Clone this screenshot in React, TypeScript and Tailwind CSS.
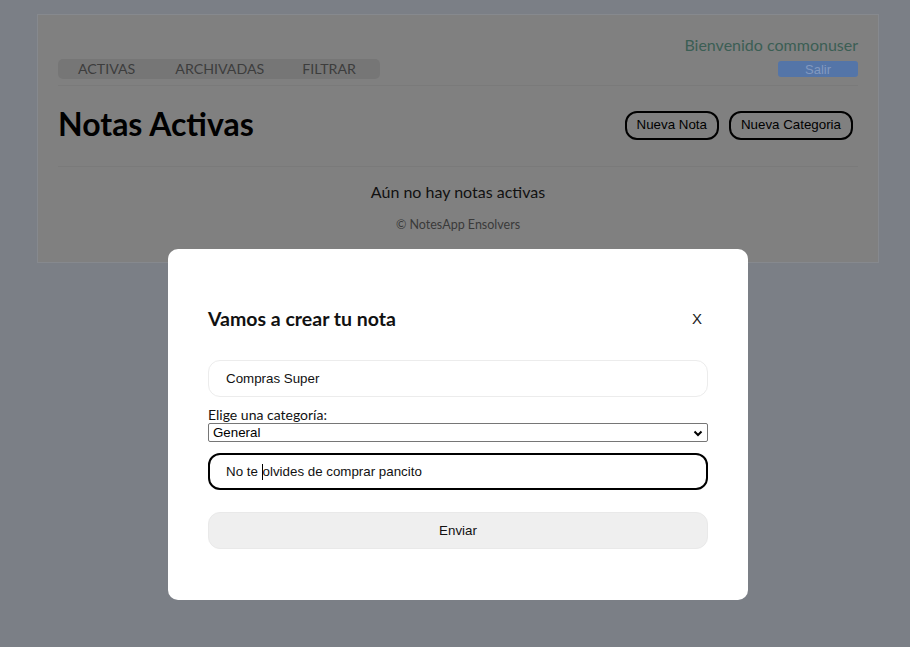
import React from "react";

const arial = { fontFamily: "'Liberation Sans', Arial, sans-serif" };

export default function App() {
  return (
    <div className="relative w-[910px] h-[647px] overflow-hidden bg-[#7b7f86]" style={{ fontFamily: "Lato, 'Open Sans', sans-serif" }}>
      {/* Page (dimmed) */}
      <div className="pt-[14px] pl-[37px]">
        <div className="w-[842px] h-[249px] bg-[#808080] border border-[#86898e] px-[20px]">
          <div className="flex justify-between items-start">
            <div className="pt-[44px]">
              <div className="flex items-center h-[20px] w-[322px] bg-[#767676] rounded-[5px] pl-[20px] text-[14.2px] text-[#3d3d3d] leading-none">
                <span>ACTIVAS</span>
                <span className="ml-[40px]">ARCHIVADAS</span>
                <span className="ml-[38px]">FILTRAR</span>
              </div>
            </div>
            <div className="flex flex-col items-end pt-[20px]">
              <div className="text-[16px] text-[#3b5e54] leading-[20px]">Bienvenido commonuser</div>
              <div className="mt-[6px] w-[80px] h-[16px] rounded-[3px] bg-[#5475a8] text-[13px] text-[#8299c0] flex items-center justify-center leading-none" style={arial}>Salir</div>
            </div>
          </div>
          <div className="mt-[6px] h-px bg-[#7a7a7a]" />
          <div className="flex justify-between items-center h-[80px]">
            <h1 className="text-[32px] font-bold text-black leading-none mt-[-4px]">Notas Activas</h1>
            <div className="flex gap-[10px] mr-[5px] mt-[-2px]" style={arial}>
              <div className="h-[29px] px-[10px] border-2 border-black rounded-[12px] flex items-center text-[13.33px] text-black">Nueva Nota</div>
              <div className="h-[29px] px-[10px] border-2 border-black rounded-[12px] flex items-center text-[13.33px] text-black">Nueva Categoria</div>
            </div>
          </div>
          <div className="h-px bg-[#7a7a7a]" />
          <div className="text-center text-[16px] text-[#111] mt-[15px] leading-[20px]">Aún no hay notas activas</div>
          <div className="text-center text-[12.5px] text-[#3a3a3a] mt-[15px] leading-[16px]">© NotesApp Ensolvers</div>
        </div>
      </div>

      {/* Modal */}
      <div className="absolute left-[168px] top-[249px] w-[580px] h-[351px] bg-white rounded-[10px] px-[40px] pt-[58px]">
        <div className="flex justify-between items-center h-[24px]">
          <div className="text-[19.5px] font-bold text-[#111]">Vamos a crear tu nota</div>
          <div className="text-[15px] text-[#222] mr-[6px]" style={arial}>X</div>
        </div>
        <div className="mt-[29px] h-[37px] rounded-[12px] border border-[#ececec] flex items-center pl-[17px] text-[13.33px] text-[#111]" style={arial}>Compras Super</div>
        <div className="mt-[10px] text-[14px] text-[#111] leading-[16px]">Elige una categoría:</div>
        <div className="h-[19px] border border-[#767676] rounded-[2px] flex items-center justify-between pl-[4px] pr-[3px] text-[13.33px] text-black" style={arial}>
          <span>General</span>
          <svg width="12" height="12" viewBox="0 0 12 12"><path d="M2.5 4.5 L6 8 L9.5 4.5" fill="none" stroke="#000" strokeWidth="2" /></svg>
        </div>
        <div className="mt-[11px] h-[37px] rounded-[12px] border-2 border-black flex items-center pl-[16px] text-[13.33px] text-[#111] whitespace-pre" style={arial}>
          <span>{"No te "}</span><span className="w-px h-[16px] bg-black" /><span>olvides de comprar pancito</span>
        </div>
        <div className="mt-[22px] h-[37px] rounded-[12px] bg-[#efefef] border border-[#e9e9e9] flex items-center justify-center text-[13.33px] text-[#111]" style={arial}>Enviar</div>
      </div>
    </div>
  );
}
